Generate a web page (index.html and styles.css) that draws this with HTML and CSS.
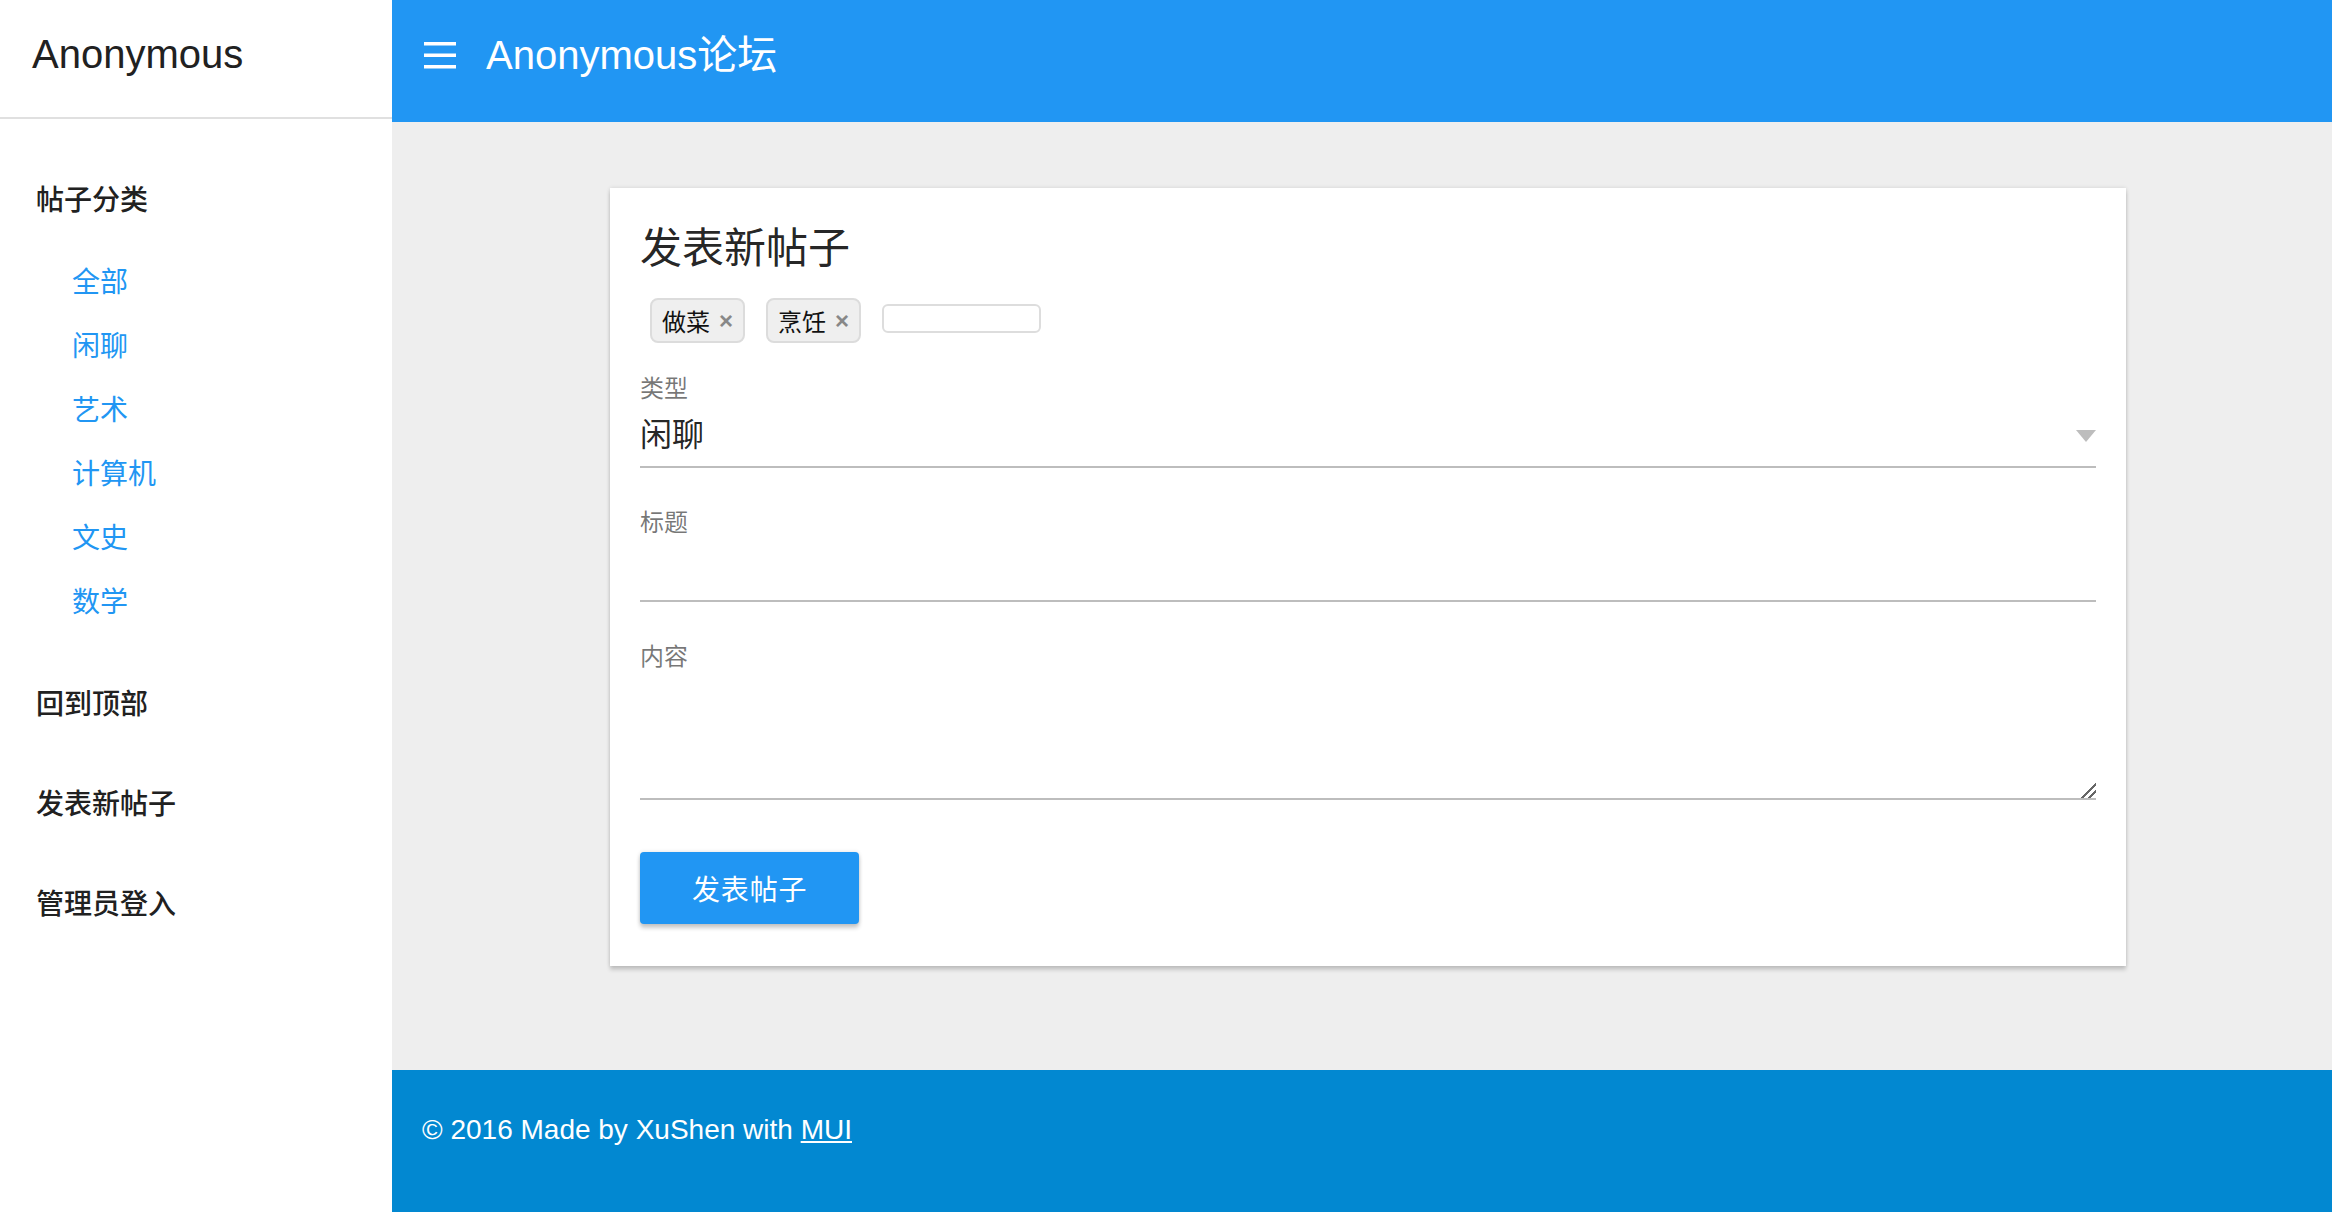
FILE: index.html
```html
<!DOCTYPE html>
<html lang="zh-CN">
<head>
<meta charset="utf-8">
<title>Anonymous论坛</title>
<link rel="stylesheet" href="styles.css">
</head>
<body>
<div class="page">
  <aside class="sidedrawer">
    <div class="brand">Anonymous</div>
    <ul class="nav">
      <li>
        <strong class="nav-head">帖子分类</strong>
        <ul class="sub">
          <li><a href="#">全部</a></li>
          <li><a href="#">闲聊</a></li>
          <li><a href="#">艺术</a></li>
          <li><a href="#">计算机</a></li>
          <li><a href="#">文史</a></li>
          <li><a href="#">数学</a></li>
        </ul>
      </li>
      <li><strong class="nav-head">回到顶部</strong></li>
      <li><strong class="nav-head">发表新帖子</strong></li>
      <li><strong class="nav-head">管理员登入</strong></li>
    </ul>
  </aside>
  <div class="wrapper">
    <header class="appbar">
      <span class="menu-toggle">
        <svg width="32" height="27" viewBox="0 0 32 27" aria-hidden="true">
          <rect x="0" y="0" width="32" height="3.5" fill="#fff"/>
          <rect x="0" y="11.5" width="32" height="3.5" fill="#fff"/>
          <rect x="0" y="23" width="32" height="3.5" fill="#fff"/>
        </svg>
      </span>
      <span class="appbar-title">Anonymous论坛</span>
    </header>
    <main class="content">
      <form class="panel">
        <h2 class="legend">发表新帖子</h2>
        <div class="tags">
          <span class="tag">做菜<a class="tag-remove">×</a></span>
          <span class="tag">烹饪<a class="tag-remove">×</a></span>
          <input class="tag-input" type="text">
        </div>
        <div class="field select-field">
          <label>类型</label>
          <select class="control"><option>闲聊</option></select>
        </div>
        <div class="field">
          <label>标题</label>
          <input class="control" type="text">
        </div>
        <div class="field">
          <label>内容</label>
          <textarea class="control textarea"></textarea>
        </div>
        <div class="actions">
          <button class="btn" type="button">发表帖子</button>
        </div>
      </form>
    </main>
    <footer class="footer">© 2016 Made by XuShen with <a href="#">MUI</a></footer>
  </div>
</div>
</body>
</html>
```

FILE: styles.css
```css
html, body {
  margin: 0;
  padding: 0;
}

body {
  font-family: "Liberation Sans", "Noto Sans CJK SC", sans-serif;
  color: rgba(0, 0, 0, 0.87);
  background: #fff;
  overflow: hidden;
}

.page {
  display: flex;
  height: 1212px;
}

/* ---------- sidebar ---------- */
.sidedrawer {
  width: 392px;
  flex: none;
  background: #fff;
}

.brand {
  height: 119px;
  box-sizing: border-box;
  padding: 0 0 9px 32px;
  display: flex;
  align-items: center;
  font-size: 40px;
  line-height: 40px;
  color: #212121;
  border-bottom: 2px solid #e0e0e0;
}

.nav {
  list-style: none;
  margin: 0;
  padding: 32px 0 0;
}

.nav-head {
  display: block;
  padding: 30px 36px;
  font-size: 28px;
  line-height: 40px;
  font-weight: 500;
  color: #212121;
}

.sub {
  list-style: none;
  margin: 0 0 20px;
  padding: 0 0 0 72px;
}

.sub li {
  padding: 12px 0;
  font-size: 28px;
  line-height: 40px;
}

.sub a {
  color: #2196F3;
  text-decoration: none;
}

/* ---------- right column ---------- */
.wrapper {
  flex: 1;
  display: flex;
  flex-direction: column;
  min-width: 0;
}

.appbar {
  height: 122px;
  flex: none;
  box-sizing: border-box;
  padding: 0 0 12px 32px;
  display: flex;
  align-items: center;
  background: #2196F3;
  color: #fff;
}

.menu-toggle {
  display: flex;
  margin-right: 30px;
}

.appbar-title {
  font-size: 40px;
  line-height: 40px;
}

.content {
  flex: none;
  background: #eee;
  padding: 66px 206px 104px 218px;
}

/* ---------- panel ---------- */
.panel {
  background: #fff;
  padding: 30px;
  box-shadow: 0 4px 4px 0 rgba(0, 0, 0, 0.16), 0 0 4px 0 rgba(0, 0, 0, 0.12);
}

.legend {
  margin: 0;
  padding: 1px 0 14px;
  font-size: 42px;
  line-height: 60px;
  font-weight: 400;
  color: rgba(0, 0, 0, 0.87);
}

.tags {
  display: flex;
  align-items: flex-start;
  padding: 5px 0 0 10px;
  margin-bottom: 31px;
}

.tag {
  display: inline-flex;
  align-items: center;
  height: 45px;
  box-sizing: border-box;
  padding: 0 10px;
  margin-right: 21px;
  border: 2px solid #dcdcdc;
  border-radius: 8px;
  background: #efefef;
  font-size: 24px;
  color: #111;
}

.tag-remove {
  margin-left: 9px;
  font-weight: 700;
  color: #888;
}

.tag-input {
  width: 159px;
  height: 29px;
  margin: 6px 0 0;
  box-sizing: border-box;
  padding: 0 8px;
  border: 2px solid #ddd;
  border-radius: 6px;
  outline: none;
  font-size: 20px;
}

.field {
  position: relative;
  padding-top: 30px;
  margin-bottom: 40px;
}

.field label {
  position: absolute;
  top: 0;
  left: 0;
  font-size: 24px;
  line-height: 30px;
  color: rgba(0, 0, 0, 0.54);
}

.control {
  display: block;
  width: 100%;
  height: 64px;
  box-sizing: border-box;
  margin: 0;
  padding: 0;
  border: none;
  border-bottom: 2px solid rgba(0, 0, 0, 0.26);
  border-radius: 0;
  background: transparent;
  outline: none;
  font-family: inherit;
  font-size: 32px;
  color: rgba(0, 0, 0, 0.87);
  -webkit-appearance: none;
  appearance: none;
}

.textarea {
  height: 128px;
  padding-top: 10px;
  resize: vertical;
}

.textarea::-webkit-scrollbar {
  width: 16px;
  height: 16px;
}

.textarea::-webkit-resizer {
  background: linear-gradient(135deg,
    transparent 0 47%,
    #666 47% 58%,
    transparent 58% 72%,
    #666 72% 83%,
    transparent 83%);
}

.select-field::after {
  content: "";
  position: absolute;
  right: 0;
  top: 56px;
  width: 0;
  height: 0;
  border-top: 12px solid #bdbdbd;
  border-left: 10px solid transparent;
  border-right: 10px solid transparent;
  pointer-events: none;
}

.actions {
  display: flex;
}

.btn {
  height: 72px;
  margin: 12px 0;
  padding: 0 52px;
  border: none;
  border-radius: 4px;
  background: #2196F3;
  color: #fff;
  font-family: inherit;
  font-size: 28px;
  letter-spacing: 0.84px;
  box-shadow: 0 0 4px rgba(0, 0, 0, 0.12), 0 4px 4px rgba(0, 0, 0, 0.2);
  cursor: pointer;
}

/* ---------- footer ---------- */
.footer {
  flex: 1;
  background: #0288D1;
  color: #fff;
  padding: 40px 0 0 30px;
  font-size: 28px;
  line-height: 40px;
}

.footer a {
  color: #fff;
}
```
